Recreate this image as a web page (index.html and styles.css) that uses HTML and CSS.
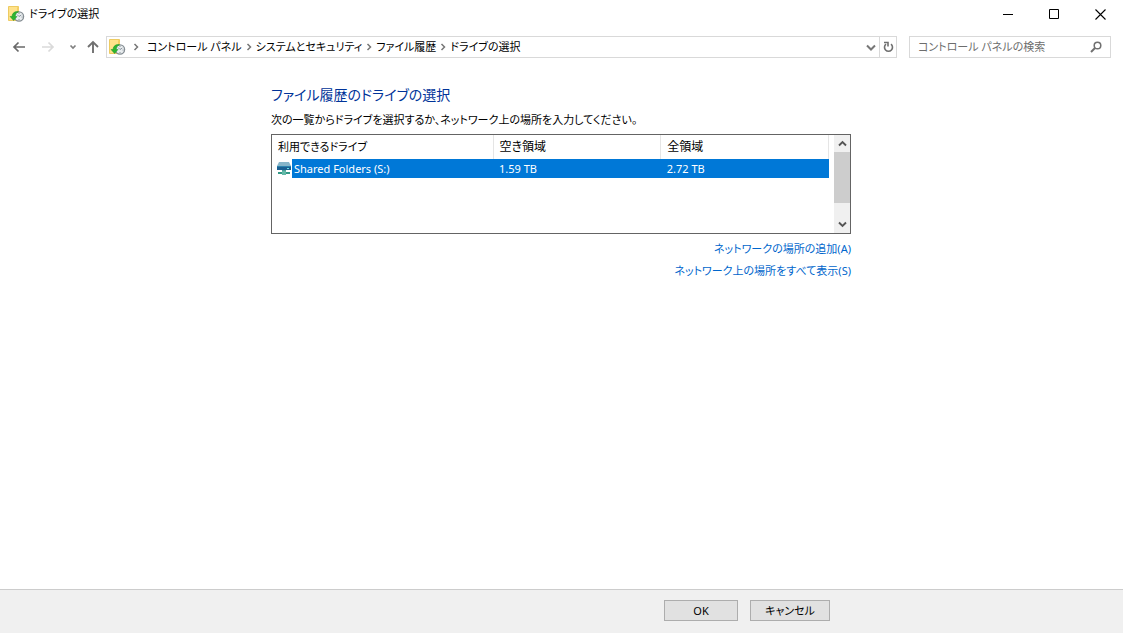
FILE: index.html
```html
<!DOCTYPE html>
<html lang="ja">
<head>
<meta charset="utf-8">
<title>ドライブの選択</title>
<link rel="stylesheet" href="styles.css">
</head>
<body>
<svg class="defs" aria-hidden="true">
  <symbol id="history" viewBox="0 0 17 17">
    <path d="M.5 .5h10v14h-10z" fill="#ffe28a" stroke="#edcb62"/>
    <path d="M9 1l2 1v4H9z" fill="#f5cf62"/>
    <circle cx="11" cy="10.500" r="4.600" fill="#e9edef" stroke="#858d93" stroke-width="1.300"/>
    <path d="M9 8.500l2 2 2.300-1.500M11 7v1M11 13v1M13.500 11h1" fill="none" stroke="#74808a" stroke-width=".8"/>
    <path d="M2 10.500h2C4.300 7 7 5 10.500 5.800 8 6.800 7.200 8.500 7.300 10.500H9L5.600 14.500z" fill="#2fb52f" stroke="#159326" stroke-width=".5"/>
  </symbol>
  <symbol id="sep" viewBox="0 0 6 8"><path d="M1.500 1l3 3-3 3" fill="none" stroke="#777" stroke-width="1.500"/></symbol>
</svg>
<div class="window">
  <header class="titlebar">
    <svg class="app-icon"><use href="#history"/></svg>
    <h1 class="title">ドライブの選択</h1>
    <div class="controls">
      <button class="control" aria-label="最小化"><svg width="10" height="11"><path d="M0 5.500h10" stroke="#000"/></svg></button>
      <button class="control" aria-label="最大化"><svg width="11" height="11"><path d="M.5 .5h9v9h-9z" fill="none" stroke="#000"/></svg></button>
      <button class="control" aria-label="閉じる"><svg width="11" height="11"><path d="M.5 .5l10 10M10.500 .5l-10 10" stroke="#000" stroke-width="1.100"/></svg></button>
    </div>
  </header>
  <nav class="navbar">
    <div class="history-buttons">
      <button class="nav-button" aria-label="戻る"><svg width="14" height="12"><path d="M13 6H2M6.500 1.500L2 6l4.500 4.500" fill="none" stroke="#6a6a6a" stroke-width="1.700"/></svg></button>
      <button class="nav-button" aria-label="進む"><svg width="14" height="12"><path d="M1 6h11M7.500 1.500L12 6l-4.500 4.500" fill="none" stroke="#dadada" stroke-width="1.700"/></svg></button>
      <button class="nav-button recent" aria-label="最近表示した場所"><svg width="8" height="6"><path d="M1.500 1.500L4 4l2.500-2.500" fill="none" stroke="#808080" stroke-width="1.700"/></svg></button>
      <button class="nav-button up" aria-label="上へ"><svg width="12" height="14"><path d="M6 13V2M1 7l5-5 5 5" fill="none" stroke="#707070" stroke-width="1.900"/></svg></button>
    </div>
    <div class="address">
      <svg class="app-icon"><use href="#history"/></svg>
      <ol class="crumbs">
        <li><svg class="sep"><use href="#sep"/></svg><a href="#">コントロール パネル</a></li>
        <li><svg class="sep"><use href="#sep"/></svg><a href="#">システムとセキュリティ</a></li>
        <li><svg class="sep"><use href="#sep"/></svg><a href="#">ファイル履歴</a></li>
        <li><svg class="sep"><use href="#sep"/></svg><a href="#">ドライブの選択</a></li>
      </ol>
      <button class="address-button" aria-label="以前の場所"><svg width="10" height="7"><path d="M1 1.500l4 4 4-4" fill="none" stroke="#777" stroke-width="2"/></svg></button>
      <button class="address-button refresh" aria-label="最新の情報に更新"><svg width="11" height="12"><path d="M8 3.200A4 4 0 1 1 3 3.200" fill="none" stroke="#707070" stroke-width="1.600"/><path d="M1 1.500h4v4" fill="none" stroke="#707070" stroke-width="1.600"/></svg></button>
    </div>
    <div class="search">
      <input class="search-input" type="text" placeholder="コントロール パネルの検索" aria-label="コントロール パネルの検索">
      <button class="search-button" aria-label="検索"><svg width="12" height="12"><circle cx="7.500" cy="4.500" r="3.300" fill="none" stroke="#707070" stroke-width="1.500"/><path d="M5 7L1 11" stroke="#707070" stroke-width="2"/></svg></button>
    </div>
  </nav>
  <main class="content">
    <h2 class="heading">ファイル履歴のドライブの選択</h2>
    <p class="intro">次の一覧からドライブを選択するか、ネットワーク上の場所を入力してください。</p>
    <div class="list">
      <table class="drives">
        <thead><tr><th class="name-col">利用できるドライブ</th><th class="size-col">空き領域</th><th class="size-col">全領域</th></tr></thead>
        <tbody><tr>
          <td class="name-cell"><div class="drive"><svg class="drive-icon" width="14" height="13"><path d="M2 0h10l2 4H0z" fill="#87b5c9"/><path d="M0 4h14v4H0z" fill="#1b5f91"/><path d="M0 4h14v1H0z" fill="#2b83ae"/><path d="M10 6h2v1h-2z" fill="#65e5e3"/><path d="M5 8h4v2H5z" fill="#4c9e99"/><path d="M1 10h12v2H1z" fill="#339887"/><path d="M5 9h4v4H5z" fill="#63b9a7"/></svg><span class="drive-name">Shared Folders (S:)</span></div></td>
          <td>1.59 TB</td><td>2.72 TB</td>
        </tr></tbody>
      </table>
      <div class="scrollbar">
        <button class="scroll-button" aria-label="上へスクロール"><svg width="9" height="7"><path d="M1 5.500L4.500 2 8 5.500" fill="none" stroke="#555" stroke-width="1.900"/></svg></button>
        <div class="track"><div class="thumb"></div></div>
        <button class="scroll-button" aria-label="下へスクロール"><svg width="9" height="7"><path d="M1 1.500L4.500 5 8 1.500" fill="none" stroke="#555" stroke-width="1.900"/></svg></button>
      </div>
    </div>
    <div class="links">
      <a href="#">ネットワークの場所の追加(A)</a>
      <a href="#">ネットワーク上の場所をすべて表示(S)</a>
    </div>
  </main>
  <footer class="footer">
    <div class="actions">
      <button class="button ok">OK</button>
      <button class="button cancel">キャンセル</button>
    </div>
  </footer>
</div>
</body>
</html>
```
FILE: styles.css
```css
* { box-sizing: border-box; }
body {
  margin: 0;
  background: #fff;
  color: #000;
  font: 11px/16px "Noto Sans", "Noto Sans CJK JP", sans-serif;
  font-feature-settings: "palt";
}
button, input { font: inherit; font-feature-settings: inherit; color: inherit; }
button { padding: 0; border: 0; background: none; display: flex; align-items: center; justify-content: center; }
svg { display: block; flex: none; }
a { text-decoration: none; color: inherit; white-space: nowrap; }
.defs { position: absolute; width: 0; height: 0; }
.window { min-height: 100vh; display: flex; flex-direction: column; }
.app-icon { width: 17px; height: 17px; }

.titlebar { display: flex; align-items: center; height: 28px; padding-left: 8px; gap: 4px; }
.title { margin: 0; font-size: 11px; font-weight: 400; }
.controls { display: flex; margin-left: auto; }
.control { width: 46px; height: 28px; }

.navbar { display: flex; align-items: center; padding: 8px 12px 0 7px; }
.history-buttons { display: flex; align-items: center; width: 99px; }
.nav-button { width: 24px; height: 22px; margin-right: 5px; }
.nav-button.recent { width: 16px; margin-right: 4px; }
.nav-button.up { width: 16px; margin: 0; }
.address, .search { display: flex; align-items: center; height: 22px; border: 1px solid #d9d9d9; }
.address { flex: 1; min-width: 0; padding-left: 2px; }
.crumbs { display: flex; flex: 1; min-width: 0; margin: 0; padding: 0 0 0 3px; list-style: none; overflow: hidden; }
.crumbs li { display: flex; align-items: center; }
.sep { width: 6px; height: 8px; margin: 0 4px; }
.crumbs li:first-child .sep { margin-right: 8px; }
.address-button { width: 16px; height: 20px; }
.refresh { border-left: 1px solid #d9d9d9; width: 17px; }
.search { width: 202px; margin-left: 12px; }
.search-input { flex: 1; min-width: 0; padding: 0 8px; border: 0; outline: 0; background: none; }
.search-input::placeholder { color: #6d6d6d; opacity: 1; }
.search-button { width: 28px; height: 20px; }

.content { flex: 1; width: 100%; max-width: 581px; margin: 0 auto; padding: 26px 1px 0 0; }
.heading { margin: 0 0 6px; font-size: 14px; line-height: 22px; font-weight: 400; color: #039; }
.intro { margin: 0 0 6px; white-space: nowrap; }
.list { display: flex; justify-content: space-between; height: 100px; border: 1px solid #646464; }
.drives { width: 557px; border-collapse: collapse; table-layout: fixed; align-self: flex-start; }
.drives th, .drives td { padding: 0 6px; text-align: left; font-weight: 400; }
.drives th { height: 24px; border-right: 1px solid #e5e5e5; }
.drives .name-col { width: 221px; }
.drives .size-col { font-size: 12px; }
.drives td { height: 19px; background: #0078d7; color: #fff; line-height: 19px; }
.drives .name-cell { padding: 0 0 0 5px; background: #fff; }
.drive { display: flex; align-items: center; gap: 1px; }
.drive-name { flex: 1; padding-left: 2px; background: #0078d7; }
.scrollbar { display: flex; flex-direction: column; width: 16px; background: #f0f0f0; }
.scroll-button { height: 17px; width: 16px; }
.track { flex: 1; }
.thumb { height: 51px; background: #cdcdcd; }
.links { display: flex; flex-direction: column; align-items: flex-end; gap: 6px; padding-top: 7px; color: #0066cc; }

.footer { border-top: 1px solid #ccc; background: #f0f0f0; padding: 10px 0 12px; }
.actions { display: flex; justify-content: flex-end; gap: 12px; max-width: 581px; margin: 0 auto; padding-right: 22px; }
.button { height: 21px; border: 1px solid #adadad; background: #e1e1e1; }
.ok { width: 74px; }
.cancel { width: 80px; }
```
